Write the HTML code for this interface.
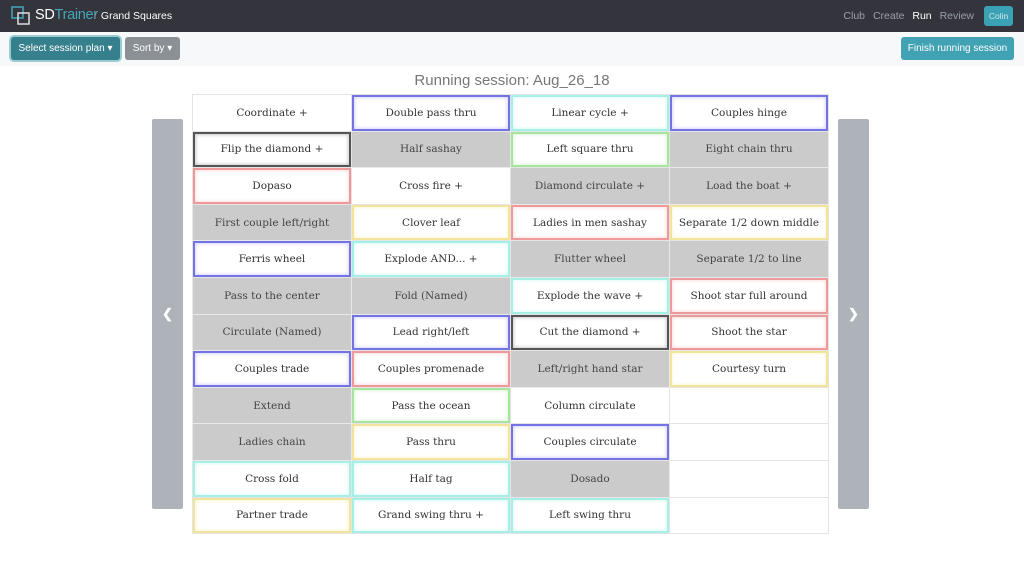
<!DOCTYPE html>
<html><head><style>
*{box-sizing:border-box;margin:0;padding:0}
body{width:1024px;height:573px;background:#fff;font-family:"Liberation Sans",sans-serif;position:relative;overflow:hidden}
.nav{position:absolute;left:0;top:0;width:1024px;height:32px;background:#33343c;}
.logo{position:absolute;left:11px;top:6px}
.brand{position:absolute;left:35px;top:7px;font-size:14.5px;color:#fff;letter-spacing:-0.3px}
.brand span{color:#45a6b8}
.crumb{position:absolute;left:94px;top:10px;font-size:10.5px;color:#fff}
.crumb i{color:#888;font-style:normal;margin-right:4px}
.links{position:absolute;right:50px;top:10px;font-size:10.5px;color:#9aa0a6}
.links span{margin-left:5px}
.colin{position:absolute;left:984px;top:6px;width:29px;height:20px;background:#3ba1b4;border-radius:3px;color:#d0e8ee;font-size:8.5px;text-align:center;line-height:20px}
.bar{position:absolute;left:0;top:32px;width:1024px;height:34px;background:#f7f8f9}
.btn{position:absolute;height:23px;border-radius:3px;color:#fff;font-size:10px;line-height:23px;text-align:center;white-space:nowrap}
.title{position:absolute;left:0;width:1024px;top:72px;text-align:center;font-size:15px;color:#777}
.side{position:absolute;top:119px;width:31px;height:390px;background:#adb3b9;border-radius:2px;color:#fff;font-size:13px;text-align:center;line-height:390px;font-weight:bold}
table{position:absolute;left:192px;top:94px;border-collapse:collapse;border:1px solid #ddd;}
td{width:159px;height:36.6px;border:1px solid #e4e4e4;text-align:center;font-family:"DejaVu Serif","Liberation Serif",serif;font-size:10.5px;color:#333;padding:0}
td.g{background:#cbcbcb;border-color:#e8e8e8;color:#444}
td.B{box-shadow:inset 0 0 0 2px #7373e3,inset 0 0 3px 3px #d8d8fa}
td.C{box-shadow:inset 0 0 0 2px #a4efe6,inset 0 0 3px 3px #e0faf6}
td.G{box-shadow:inset 0 0 0 2px #a8e3a0,inset 0 0 3px 3px #e0f6dc}
td.R{box-shadow:inset 0 0 0 2px #ef9a9a,inset 0 0 3px 3px #fbe0e0}
td.Y{box-shadow:inset 0 0 0 2px #f3e49c,inset 0 0 3px 3px #fcf6da}
td.K{box-shadow:inset 0 0 0 2px #555,inset 0 0 3px 3px #ccc}
</style></head><body>
<div class="nav">
<svg class="logo" width="20" height="20" viewBox="0 0 20 20"><rect x="1" y="1" width="11" height="11" fill="none" stroke="#45a6b8" stroke-width="1.5"/><rect x="7" y="7" width="11" height="11" fill="none" stroke="#ddd" stroke-width="1.5"/></svg>
<div class="brand">SD<span>Trainer</span></div>
<div class="crumb"><i>/</i>Grand Squares</div>
<div class="links"><span>Club</span> <span>Create</span> <span style="color:#fff">Run</span> <span>Review</span></div>
<div class="colin">Colin</div>
</div>
<div class="bar"></div>
<div class="btn" style="left:11px;top:37px;width:109px;background:#367f8c;box-shadow:0 0 0 2px #9ccbd4">Select session plan ▾</div>
<div class="btn" style="left:125px;top:37px;width:55px;background:#8a9096">Sort by ▾</div>
<div class="btn" style="left:901px;top:37px;width:113px;background:#41a2b4">Finish running session</div>
<div class="title">Running session: Aug_26_18</div>
<div class="side" style="left:152px">&#10094;</div>
<div class="side" style="left:838px">&#10095;</div>
<table>
<tr><td>Coordinate +</td><td class="B">Double pass thru</td><td class="C">Linear cycle +</td><td class="B">Couples hinge</td></tr>
<tr><td class="K">Flip the diamond +</td><td class="g">Half sashay</td><td class="G">Left square thru</td><td class="g">Eight chain thru</td></tr>
<tr><td class="R">Dopaso</td><td>Cross fire +</td><td class="g">Diamond circulate +</td><td class="g">Load the boat +</td></tr>
<tr><td class="g">First couple left/right</td><td class="Y">Clover leaf</td><td class="R">Ladies in men sashay</td><td class="Y">Separate 1/2 down middle</td></tr>
<tr><td class="B">Ferris wheel</td><td class="C">Explode AND... +</td><td class="g">Flutter wheel</td><td class="g">Separate 1/2 to line</td></tr>
<tr><td class="g">Pass to the center</td><td class="g">Fold (Named)</td><td class="C">Explode the wave +</td><td class="R">Shoot star full around</td></tr>
<tr><td class="g">Circulate (Named)</td><td class="B">Lead right/left</td><td class="K">Cut the diamond +</td><td class="R">Shoot the star</td></tr>
<tr><td class="B">Couples trade</td><td class="R">Couples promenade</td><td class="g">Left/right hand star</td><td class="Y">Courtesy turn</td></tr>
<tr><td class="g">Extend</td><td class="G">Pass the ocean</td><td>Column circulate</td><td></td></tr>
<tr><td class="g">Ladies chain</td><td class="Y">Pass thru</td><td class="B">Couples circulate</td><td></td></tr>
<tr><td class="C">Cross fold</td><td class="C">Half tag</td><td class="g">Dosado</td><td></td></tr>
<tr><td class="Y">Partner trade</td><td class="C">Grand swing thru +</td><td class="C">Left swing thru</td><td></td></tr>
</table>
</body></html>
